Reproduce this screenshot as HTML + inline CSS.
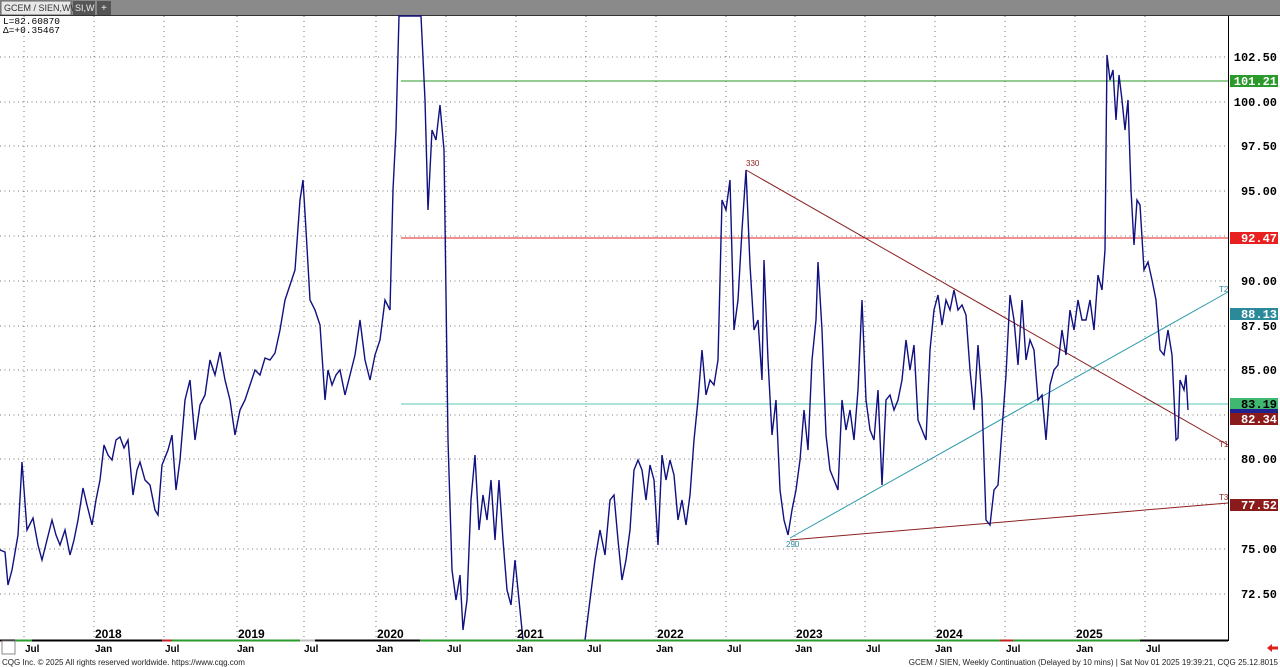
<!DOCTYPE html>
<html><head><meta charset="utf-8"><style>
body{margin:0;width:1280px;height:667px;overflow:hidden;background:#fff;font-family:"Liberation Sans",sans-serif}
</style></head><body>
<svg width="1280" height="667" viewBox="0 0 1280 667" xmlns="http://www.w3.org/2000/svg" style="position:absolute;left:0;top:0">
<rect x="0" y="0" width="1280" height="15" fill="#8a8a8a"/>
<rect x="1" y="1" width="70" height="14" fill="#e8e8e8" stroke="#666"/>
<text x="4" y="11" font-size="9" fill="#333" font-family="Liberation Sans">GCEM / SIEN,WWC</text>
<rect x="73" y="1" width="22" height="14" fill="#555"/>
<text x="75" y="11" font-size="9" fill="#eee">SI,W</text>
<rect x="97" y="1" width="14" height="14" fill="#555"/>
<text x="101" y="11" font-size="10" fill="#eee">+</text>
<rect x="0" y="15" width="1280" height="640" fill="#fff"/>
<line x1="0" y1="15.5" x2="1280" y2="15.5" stroke="#333"/>
<text x="3" y="24" font-size="9.5" font-family="Liberation Mono" fill="#000">L=82.60870</text>
<text x="3" y="33" font-size="9.5" font-family="Liberation Mono" fill="#000">Δ=+0.35467</text>
<g stroke="#777" stroke-dasharray="1,3.5" stroke-width="1">
<line x1="0" y1="57" x2="1228" y2="57"/><line x1="0" y1="102" x2="1228" y2="102"/><line x1="0" y1="146" x2="1228" y2="146"/><line x1="0" y1="191" x2="1228" y2="191"/><line x1="0" y1="236" x2="1228" y2="236"/><line x1="0" y1="281" x2="1228" y2="281"/><line x1="0" y1="326" x2="1228" y2="326"/><line x1="0" y1="370" x2="1228" y2="370"/><line x1="0" y1="415" x2="1228" y2="415"/><line x1="0" y1="459" x2="1228" y2="459"/><line x1="0" y1="504" x2="1228" y2="504"/><line x1="0" y1="549" x2="1228" y2="549"/><line x1="0" y1="594" x2="1228" y2="594"/>
</g>
<g stroke="#777" stroke-dasharray="1,4" stroke-width="1">
<line x1="24" y1="16" x2="24" y2="640"/><line x1="94" y1="16" x2="94" y2="640"/><line x1="164" y1="16" x2="164" y2="640"/><line x1="237" y1="16" x2="237" y2="640"/><line x1="304" y1="16" x2="304" y2="640"/><line x1="376" y1="16" x2="376" y2="640"/><line x1="446" y1="16" x2="446" y2="640"/><line x1="516" y1="16" x2="516" y2="640"/><line x1="586" y1="16" x2="586" y2="640"/><line x1="656" y1="16" x2="656" y2="640"/><line x1="726" y1="16" x2="726" y2="640"/><line x1="795" y1="16" x2="795" y2="640"/><line x1="865" y1="16" x2="865" y2="640"/><line x1="935" y1="16" x2="935" y2="640"/><line x1="1005" y1="16" x2="1005" y2="640"/><line x1="1075" y1="16" x2="1075" y2="640"/><line x1="1145" y1="16" x2="1145" y2="640"/>
</g>
<line x1="401" y1="81" x2="1228" y2="81" stroke="#2a9a2a"/>
<line x1="401" y1="238" x2="1228" y2="238" stroke="#e02020"/>
<line x1="401" y1="404" x2="1228" y2="404" stroke="#5cc8b0"/>
<line x1="746" y1="170" x2="1228" y2="445" stroke="#8b2020"/>
<line x1="790" y1="538" x2="1228" y2="292" stroke="#2a9aaa"/>
<line x1="790" y1="540" x2="1228" y2="503" stroke="#8b2020"/>
<text x="746" y="166" font-size="8" fill="#8b2020">330</text>
<text x="786" y="547" font-size="8" fill="#2a8a9a">290</text>
<text x="1219" y="292" font-size="8" fill="#2a8a9a">T2</text>
<text x="1219" y="447" font-size="8" fill="#8b2020">T1</text>
<text x="1219" y="500" font-size="8" fill="#8b2020">T3</text>
<polyline fill="none" stroke="#101080" stroke-width="1.4" points="0,550 5,552 8,585 12,570 18,535 22,462 27,530 33,518 38,545 42,560 47,540 52,520 56,535 60,545 65,530 70,555 74,540 78,520 83,488 87,505 92,525 96,500 100,480 104,445 108,455 112,460 116,440 120,437 124,448 128,440 133,495 137,470 140,462 145,480 150,485 155,510 158,515 162,465 168,450 172,435 176,490 180,460 185,400 190,380 195,440 200,405 205,395 210,360 215,375 220,352 225,380 230,400 235,435 240,410 245,400 250,385 255,370 260,375 265,358 270,360 275,353 280,330 285,300 290,285 295,270 300,200 303,180 306,230 310,300 315,310 320,325 325,400 328,370 332,385 336,375 340,370 345,395 350,375 355,355 360,320 365,360 370,380 375,355 380,340 385,300 390,310 393,190 396,130 399,16 421,16 425,100 428,210 432,130 436,140 440,105 444,150 448,440 452,570 456,600 460,575 463,630 467,600 471,500 475,455 479,530 483,495 487,520 491,480 495,540 499,480 503,540 507,590 511,605 515,560 519,600 523,640"/>
<polyline fill="none" stroke="#101080" stroke-width="1.4" points="585,640 590,600 595,560 600,530 605,555 610,500 614,495 618,540 622,580 626,560 630,530 634,470 638,460 642,470 646,500 650,465 654,480 658,545 662,455 666,480 670,460 674,475 678,520 682,500 686,525 690,495 694,440 698,400 702,350 706,395 710,380 714,385 718,360 722,200 726,210 730,180 734,330 738,300 742,230 746,170 750,265 754,330 758,320 762,380 764,260 768,360 772,435 776,400 780,490 784,520 788,535 792,510 796,490 800,460 804,410 808,450 812,360 816,320 818,262 822,330 826,435 830,470 834,480 838,490 842,400 846,430 850,410 854,440 858,390 862,300 866,400 870,430 874,440 878,390 882,485 886,400 890,395 894,410 898,400 902,380 906,340 910,370 914,345 918,420 922,430 926,440 930,350 934,310 938,295 942,325 946,300 950,310 954,290 958,310 962,305 966,315 970,370 974,410 978,345 982,400 986,520 990,525 994,490 998,485 1002,430 1006,375 1010,295 1014,320 1018,365 1022,300 1026,360 1030,340 1034,350 1038,400 1042,395 1046,440 1050,385 1054,370 1058,365 1062,330 1066,355 1070,310 1074,330 1078,300 1082,320 1086,320 1090,300 1094,330 1098,275 1102,290 1105,250 1107,55 1110,80 1113,70 1116,120 1119,75 1122,100 1125,130 1128,100 1131,190 1134,245 1137,200 1140,205 1144,270 1148,262 1152,280 1156,300 1160,350 1164,355 1168,330 1172,355 1176,440 1178,438 1180,380 1184,390 1186,375 1188,410"/>
<line x1="1228.5" y1="16" x2="1228.5" y2="641" stroke="#000"/>
<g font-family="Liberation Mono" font-size="12" font-weight="bold" fill="#000" text-anchor="end">
<text x="1277" y="61">102.50</text><text x="1277" y="106">100.00</text><text x="1277" y="150">97.50</text><text x="1277" y="195">95.00</text><text x="1277" y="285">90.00</text><text x="1277" y="330">87.50</text><text x="1277" y="374">85.00</text><text x="1277" y="463">80.00</text><text x="1277" y="553">75.00</text><text x="1277" y="598">72.50</text>
</g>
<g font-family="Liberation Mono" font-size="12" font-weight="bold" fill="#fff" text-anchor="end">
<rect x="1230" y="75" width="48" height="12" fill="#2a9a2a"/><text x="1277" y="85">101.21</text>
<rect x="1230" y="232" width="48" height="12" fill="#e82020"/><text x="1277" y="242">92.47</text>
<rect x="1230" y="308" width="48" height="12" fill="#2a8a9a"/><text x="1277" y="318">88.13</text>
<rect x="1230" y="398" width="48" height="12" fill="#40b870" /><text x="1277" y="408" fill="#000">83.19</text>
<rect x="1230" y="409" width="48" height="4" fill="#202090"/>
<rect x="1230" y="413" width="48" height="12" fill="#8b1a1a"/><text x="1277" y="423">82.34</text>
<rect x="1230" y="499" width="48" height="12" fill="#8b1a1a"/><text x="1277" y="509">77.52</text>
</g>
<line x1="0" y1="640.5" x2="1228" y2="640.5" stroke="#000" stroke-width="2"/>
<line x1="15" y1="640.5" x2="32" y2="640.5" stroke="#2a9a2a" stroke-width="2"/>
<line x1="162" y1="640.5" x2="172" y2="640.5" stroke="#c02020" stroke-width="2"/>
<line x1="172" y1="640.5" x2="300" y2="640.5" stroke="#2a9a2a" stroke-width="2"/>
<line x1="300" y1="640.5" x2="315" y2="640.5" stroke="#bbb" stroke-width="2"/>
<line x1="420" y1="640.5" x2="1000" y2="640.5" stroke="#2a9a2a" stroke-width="2"/>
<line x1="1000" y1="640.5" x2="1013" y2="640.5" stroke="#c02020" stroke-width="2"/>
<line x1="1013" y1="640.5" x2="1140" y2="640.5" stroke="#2a9a2a" stroke-width="2"/>
<g font-family="Liberation Sans" font-size="12" font-weight="bold" fill="#000">
<text x="95" y="638">2018</text><text x="238" y="638">2019</text><text x="377" y="638">2020</text><text x="517" y="638">2021</text><text x="657" y="638">2022</text><text x="796" y="638">2023</text><text x="936" y="638">2024</text><text x="1076" y="638">2025</text>
</g>
<g font-family="Liberation Sans" font-size="10" font-weight="bold" fill="#000">
<text x="25" y="652">Jul</text><text x="95" y="652">Jan</text><text x="165" y="652">Jul</text><text x="237" y="652">Jan</text><text x="304" y="652">Jul</text><text x="376" y="652">Jan</text><text x="447" y="652">Jul</text><text x="516" y="652">Jan</text><text x="587" y="652">Jul</text><text x="656" y="652">Jan</text><text x="727" y="652">Jul</text><text x="795" y="652">Jan</text><text x="866" y="652">Jul</text><text x="935" y="652">Jan</text><text x="1006" y="652">Jul</text><text x="1076" y="652">Jan</text><text x="1146" y="652">Jul</text>
</g>
<rect x="2" y="641" width="13" height="13" fill="#fff" stroke="#888"/>
<rect x="0" y="656" width="1280" height="11" fill="#fff"/>
<text x="2" y="665" font-size="8" fill="#222">CQG Inc. © 2025 All rights reserved worldwide. https://www.cqg.com</text>
<text x="1278" y="665" font-size="8" fill="#222" text-anchor="end">GCEM / SIEN, Weekly Continuation (Delayed by 10 mins) | Sat Nov 01 2025 19:39:21, CQG 25.12.8015</text>
<path d="M1267,648 l5,-4 v2.5 h6 v3 h-6 v2.5z" fill="#e02020"/>
</svg>
</body></html>
